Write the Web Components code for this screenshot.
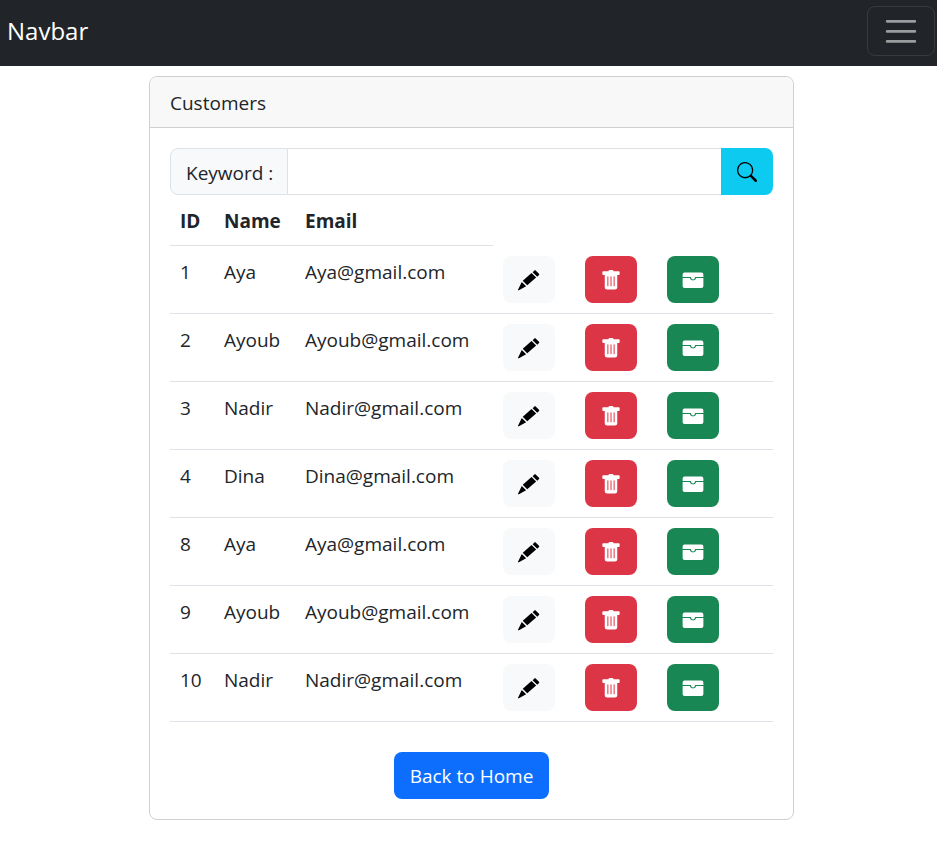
<!DOCTYPE html>
<html lang="en">
<head>
<meta charset="utf-8">
<meta name="viewport" content="width=device-width, initial-scale=1">
<title>Customers</title>
<style>
  body {
    margin: 0;
    background: #fff;
    color: #212529;
    font: 19px/30px "Open Sans", "Noto Sans", sans-serif;
  }
  main { padding: 10px 0 26px 6px; }
</style>
</head>
<body>
<app-navbar>Navbar</app-navbar>
<main>
  <app-card>
    <span slot="header">Customers</span>
    <search-group></search-group>
    <customer-table></customer-table>
    <home-link>Back to Home</home-link>
  </app-card>
</main>
<script>
  const define = (name, html, setup) => {
    const template = document.createElement('template');
    template.innerHTML = '<style>:host,*,*::before,*::after{box-sizing:border-box}</style>' + html;
    customElements.define(name, class extends HTMLElement {
      constructor() {
        super();
        this.attachShadow({ mode: 'open' }).append(template.content.cloneNode(true));
        if (setup) setup(this);
      }
    });
  };

  const icons = {
    search: '<path d="M11.742 10.344a6.5 6.5 0 1 0-1.397 1.398h-.001c.03.04.062.078.098.115l3.85 3.85a1 1 0 0 0 1.415-1.414l-3.85-3.85a1 1 0 0 0-.115-.1zM12 6.5a5.5 5.5 0 1 1-11 0 5.5 5.5 0 0 1 11 0"/>',
    pencil: '<path d="M12.3.3a.7.7 0 0 1 1 0l2.7 2.7a.7.7 0 0 1 0 1l-1.4 1.3-3.7-3.6zM10 2.4l3.7 3.6-7.1 6.2-3.6-3.6zM2.2 9.5l3.5 3.4-5.8 3.2a.4.4 0 0 1-.6-.6z"/>',
    trash: '<path d="M1.7 1a.6.6 0 0 0-.6.6v1.8a.6.6 0 0 0 .6.6H3v9.5a2 2 0 0 0 2 2h6a2 2 0 0 0 2-2V4h1.3a.6.6 0 0 0 .6-.6V1.6a.6.6 0 0 0-.6-.6H10a1 1 0 0 0-1-1H7a1 1 0 0 0-1 1zm3.8 4a.4.4 0 0 1 .4.4v7.2a.4.4 0 0 1-.8 0V5.4a.4.4 0 0 1 .4-.4M8 5a.4.4 0 0 1 .4.4v7.2a.4.4 0 0 1-.8 0V5.4A.4.4 0 0 1 8 5m2.9.4v7.2a.4.4 0 0 1-.8 0V5.4a.4.4 0 0 1 .8 0"/>',
    wallet: '<path d="M1.2 2A1.5 1.5 0 0 0-.3 3.5v2h6.3a.5.5 0 0 1 .5.5c0 .253.08.644.306.958.207.288.557.542 1.194.542s.987-.254 1.194-.542C9.42 6.644 9.5 6.253 9.5 6a.5.5 0 0 1 .5-.5h6.3v-2A1.5 1.5 0 0 0 14.8 2z"/><path d="M16.3 6.3h-5.851a2.7 2.7 0 0 1-.443 1.042C9.613 7.888 8.963 8.3 8 8.3s-1.613-.412-2.006-.958A2.7 2.7 0 0 1 5.551 6.3H-.3v6.5a1.5 1.5 0 0 0 1.5 1.5h13.6a1.5 1.5 0 0 0 1.5-1.5z"/>'
  };

  define('app-icon', `
    <style>
      :host { display: block; width: 20px; height: 20px; }
      svg { display: block; width: 100%; height: 100%; fill: currentColor; overflow: visible; }
    </style>
    <svg viewBox="0 0 16 16" aria-hidden="true"></svg>`,
    el => { el.shadowRoot.querySelector('svg').innerHTML = icons[el.getAttribute('name')] || ''; });

  define('app-navbar', `
    <style>
      :host { display: block; background: #212529; }
      nav { display: flex; align-items: center; justify-content: space-between; min-height: 66px; padding: 6px 2px 10px 7px; }
      a { color: #fff; font-size: 24px; line-height: 36px; text-decoration: none; }
      button { display: grid; place-items: center; width: 68px; height: 50px; padding: 0; background: none; border: 1px solid #373b3e; border-radius: 8px; }
      svg { width: 38px; height: 38px; }
    </style>
    <nav>
      <a href="#"><slot></slot></a>
      <button type="button" aria-label="Toggle navigation">
        <svg viewBox="0 0 30 30" fill="none" stroke="#fff" stroke-opacity=".55" stroke-width="2" stroke-linecap="round" aria-hidden="true"><path d="M4 7.4h22M4 15.3h22M4 23.2h22"/></svg>
      </button>
    </nav>`);

  define('app-card', `
    <style>
      :host { display: block; max-width: 645px; margin: 0 auto; border: 1px solid #d0d0d0; border-radius: 8px; overflow: hidden; }
      header { padding: 11px 20px 9px; background: #f8f8f8; border-bottom: 1px solid #cfcfcf; }
      .body { padding: 20px; }
    </style>
    <header><slot name="header"></slot></header>
    <div class="body"><slot></slot></div>`);

  define('search-group', `
    <style>
      :host { display: block; }
      form { display: flex; height: 47px; }
      label { display: flex; align-items: center; width: 118px; padding: 2px 15px 0; background: #f8f9fa; border: 1px solid #dee2e6; border-radius: 8px 0 0 8px; white-space: nowrap; }
      input { flex: 1; min-width: 0; padding: 0 15px; border: solid #dee2e6; border-width: 1px 0; background: #fff; color: inherit; font: inherit; }
      button { display: grid; place-items: center; width: 52px; padding: 0; border: 0; border-radius: 0 8px 8px 0; background: #0dcaf0; color: #000; }
    </style>
    <form>
      <label for="keyword">Keyword :</label>
      <input id="keyword" type="text">
      <button type="button" aria-label="Search"><app-icon name="search"></app-icon></button>
    </form>`);

  define('customer-table', `
    <style>
      :host { display: block; }
      table { width: 100%; table-layout: fixed; border-collapse: separate; border-spacing: 0; }
      .id { width: 44px; }
      .name { width: 81px; }
      .email { width: 198px; }
      .action { width: 82px; }
      th, td { padding: 11px 10px 9px; border-bottom: 1px solid #dee2e6; text-align: left; vertical-align: top; white-space: nowrap; }
      td:nth-child(n+4) { padding: 10px; }
      th { font-weight: 700; }
      button { display: grid; place-items: center; width: 52px; height: 47px; padding: 0; border: 0; border-radius: 8px; color: #fff; }
      .edit { background: #f8f9fa; color: #000; }
      .delete { background: #dc3545; }
      .open { background: #198754; }
    </style>
    <table>
      <colgroup><col class="id"><col class="name"><col class="email"><col class="action"><col class="action"><col></colgroup>
      <thead><tr><th scope="col">ID</th><th scope="col">Name</th><th scope="col">Email</th></tr></thead>
      <tbody></tbody>
    </table>`,
    el => {
      const rows = [[1, 'Aya'], [2, 'Ayoub'], [3, 'Nadir'], [4, 'Dina'], [8, 'Aya'], [9, 'Ayoub'], [10, 'Nadir']];
      el.shadowRoot.querySelector('tbody').innerHTML = rows.map(([id, name]) => `
        <tr><td>${id}</td><td>${name}</td><td>${name}@gmail.com</td>
        <td><button type="button" class="edit" aria-label="Edit customer ${id}"><app-icon name="pencil"></app-icon></button></td>
        <td><button type="button" class="delete" aria-label="Delete customer ${id}"><app-icon name="trash"></app-icon></button></td>
        <td><button type="button" class="open" aria-label="Accounts of customer ${id}"><app-icon name="wallet"></app-icon></button></td></tr>`).join('');
    });

  define('home-link', `
    <style>
      :host { display: flex; justify-content: center; margin-top: 30px; }
      button { height: 47px; padding: 0 16px; border: 0; border-radius: 8px; background: #0d6efd; color: #fff; font: inherit; }
    </style>
    <button type="button"><slot></slot></button>`);
</script>
</body>
</html>
